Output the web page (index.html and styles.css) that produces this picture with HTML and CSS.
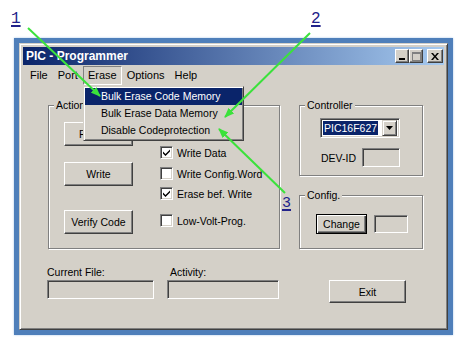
FILE: index.html
```html
<!DOCTYPE html>
<html lang="en">
<head>
    <meta charset="UTF-8">
    <title>PIC - Programmer</title>
    <link rel="stylesheet" href="styles.css">
</head>
<body>
<div class="stage">
    <div class="window">
        <div class="frame">
            <div class="titlebar">
                <span class="title">PIC - Programmer</span>
                <div class="caption-btns">
                    <span class="cbtn"><svg width="8" height="8" viewBox="0 0 8 8"><rect x="1" y="6" width="6" height="2" fill="#000"/></svg></span>
                    <span class="cbtn"><svg width="9" height="9" viewBox="0 0 9 9"><rect x="0.5" y="0.5" width="8" height="8" fill="none" stroke="#808080"/><rect x="0" y="0" width="9" height="2" fill="#808080"/></svg></span>
                    <span class="cbtn close"><svg width="8" height="7" viewBox="0 0 8 7"><path d="M0 0h2l2 2.5 2-2.5h2l-3 3.5 3 3.5h-2l-2-2.5-2 2.5h-2l3-3.5z" fill="#000"/></svg></span>
                </div>
            </div>
            <div class="menubar">
                <span class="menu">File</span>
                <span class="menu">Port</span>
                <span class="menu open">Erase
                    <div class="dropdown">
                        <div class="item hot">Bulk Erase Code Memory</div>
                        <div class="item">Bulk Erase Data Memory</div>
                        <div class="item">Disable Codeprotection</div>
                    </div>
                </span>
                <span class="menu">Options</span>
                <span class="menu">Help</span>
            </div>
            <div class="client">
                <div class="top">
                    <fieldset class="group">
                        <legend>Actions</legend>
                        <div class="actions-body">
                            <div class="btn-col">
                                <button class="btn read">Read All</button>
                                <button class="btn write">Write</button>
                                <button class="btn verify">Verify Code</button>
                            </div>
                            <div class="check-col">
                                <div class="check"><span class="box"><svg width="7" height="7" viewBox="0 0 7 7"><path d="M0 2.5l2.5 2.5 4.5-4.5v2l-4.5 4.5-2.5-2.5z" fill="#000"/></svg></span>Write Data</div>
                                <div class="check gap-a"><span class="box"></span>Write Config.Word</div>
                                <div class="check gap-b"><span class="box"><svg width="7" height="7" viewBox="0 0 7 7"><path d="M0 2.5l2.5 2.5 4.5-4.5v2l-4.5 4.5-2.5-2.5z" fill="#000"/></svg></span>Erase bef. Write</div>
                                <div class="check gap-c"><span class="box"></span>Low-Volt-Prog.</div>
                            </div>
                        </div>
                    </fieldset>
                    <div class="side">
                        <fieldset class="group">
                            <legend>Controller</legend>
                            <div class="controller-body">
                                <div class="select">
                                    <span class="sel-text">PIC16F627</span>
                                    <span class="sel-btn"><svg width="7" height="4" viewBox="0 0 7 4"><path d="M0 0h7l-3.5 4z" fill="#000"/></svg></span>
                                </div>
                                <div class="devid">
                                    <span>DEV-ID</span>
                                    <span class="field devid-box"></span>
                                </div>
                            </div>
                        </fieldset>
                        <fieldset class="group config">
                            <legend>Config.</legend>
                            <div class="config-body">
                                <button class="btn default change">Change</button>
                                <span class="field config-box"></span>
                            </div>
                        </fieldset>
                    </div>
                </div>
                <div class="bottom">
                    <div class="file-col">
                        <div class="label">Current File:</div>
                        <div class="field status"></div>
                    </div>
                    <div class="act-col">
                        <div class="label">Activity:</div>
                        <div class="field status"></div>
                    </div>
                    <button class="btn exit">Exit</button>
                </div>
            </div>
        </div>
    </div>

    <svg class="arrows" width="465" height="343" viewBox="0 0 465 343">
        <defs>
            <marker id="head" viewBox="0 0 10 8" refX="9" refY="4" markerWidth="10" markerHeight="8" markerUnits="userSpaceOnUse" orient="auto">
                <path d="M0 0L10 4L0 8z" fill="#3be23b"/>
            </marker>
        </defs>
        <line x1="28" y1="28" x2="100" y2="96" stroke="#3be23b" stroke-width="2" marker-end="url(#head)"/>
        <line x1="310" y1="33" x2="225" y2="117" stroke="#3be23b" stroke-width="2" marker-end="url(#head)"/>
        <line x1="285" y1="193" x2="219" y2="129" stroke="#3be23b" stroke-width="2" marker-end="url(#head)"/>
    </svg>
    <span class="tag t1">1</span>
    <span class="tag t2">2</span>
    <span class="tag t3">3</span>
</div>
</body>
</html>
```

FILE: styles.css
```css
body {
    margin: 0;
    background: #fff;
    font-family: "Liberation Sans", Arial, sans-serif;
    font-size: 10.5px;
    color: #000;
}
.stage {
    position: relative;
    width: 465px;
    height: 343px;
    padding: 38px 0 0 14px;
    box-sizing: border-box;
    overflow: hidden;
}
.window {
    width: 439px;
    height: 297px;
    box-sizing: border-box;
    border: 5px solid #4f7fba;
    box-shadow: 0 0 2px #a9c8ea;
}
.frame {
    height: 100%;
    box-sizing: border-box;
    background: #d4d0c8;
    border: 1px solid;
    border-color: #d4d0c8 #404040 #404040 #d4d0c8;
    box-shadow: inset 1px 1px #fff, inset -1px -1px #808080;
    padding: 3px;
}

/* title bar */
.titlebar {
    height: 18px;
    display: flex;
    align-items: center;
    justify-content: space-between;
    background: linear-gradient(to right, #0a246a, #a6caf0);
    padding: 0 1px 0 3px;
}
.title {
    color: #fff;
    font-weight: bold;
    font-size: 12px;
}
.caption-btns {
    display: flex;
}
.cbtn {
    width: 14px;
    height: 14px;
    box-sizing: border-box;
    background: #d4d0c8;
    border: 1px solid;
    border-color: #fff #404040 #404040 #fff;
    box-shadow: inset -1px -1px #808080;
    display: flex;
    align-items: center;
    justify-content: center;
}
.cbtn.close {
    width: 16px;
    margin-left: 4px;
}

/* menu */
.menubar {
    display: flex;
    height: 20px;
    padding: 1px 0 0 2px;
    box-sizing: border-box;
    font-size: 11px;
}
.menu {
    position: relative;
    padding: 0 4px;
    line-height: 16px;
    border: 1px solid transparent;
}
.menu.open {
    border-color: #808080 #fff #fff #808080;
}
.dropdown {
    position: absolute;
    top: calc(100% + 2px);
    left: -1px;
    width: 161px;
    box-sizing: border-box;
    background: #d4d0c8;
    border: 1px solid;
    border-color: #d4d0c8 #404040 #404040 #d4d0c8;
    box-shadow: inset 1px 1px #fff, inset -1px -1px #808080;
    padding: 1px;
    z-index: 5;
    font-size: 10.5px;
}
.item {
    line-height: 17px;
    padding-left: 16px;
    white-space: nowrap;
}
.item.hot {
    background: #0a246a;
    color: #fff;
}

/* client area */
.client {
    padding: 14px 0 0 25px;
}
.top {
    display: grid;
    grid-template-columns: 232px 124px;
    column-gap: 19px;
    align-items: start;
}
.group {
    margin: 0;
    padding: 0;
    min-width: 0;
    border: 1px solid #808080;
    box-shadow: inset 1px 1px #fff, 1px 1px #fff;
}
.group legend {
    margin-left: 5px;
    padding: 0 2px;
    line-height: 13px;
    background: #d4d0c8;
}
.btn {
    box-sizing: border-box;
    background: #d4d0c8;
    border: 1px solid;
    border-color: #fff #404040 #404040 #fff;
    box-shadow: inset -1px -1px #808080;
    font-family: inherit;
    font-size: 10.5px;
    color: #000;
    padding: 0;
    display: flex;
    align-items: center;
    justify-content: center;
}
.btn.default {
    border-color: #000;
    box-shadow: inset 1px 1px #fff, inset -1px -1px #404040, inset -2px -2px #808080;
}
.field {
    display: block;
    box-sizing: border-box;
    border: 1px solid;
    border-color: #808080 #fff #fff #808080;
    box-shadow: inset 1px 1px #404040, inset -1px -1px #d4d0c8;
    background: #d4d0c8;
}

/* actions */
.actions-body {
    height: 136px;
    display: grid;
    grid-template-columns: 69px auto;
    column-gap: 27px;
    padding-left: 15px;
}
.btn-col {
    display: flex;
    flex-direction: column;
}
.btn-col .btn {
    height: 24px;
}
.read {
    margin-top: 10px;
}
.write {
    margin-top: 16px;
}
.verify {
    margin-top: 24px;
}
.check-col {
    padding-top: 34px;
}
.check {
    display: flex;
    align-items: center;
    gap: 4px;
    height: 13px;
    white-space: nowrap;
}
.gap-a {
    margin-top: 8px;
}
.gap-b {
    margin-top: 7px;
}
.gap-c {
    margin-top: 14px;
}
.box {
    width: 13px;
    height: 13px;
    flex: none;
    box-sizing: border-box;
    background: #fff;
    border: 1px solid;
    border-color: #808080 #fff #fff #808080;
    box-shadow: inset 1px 1px #404040, inset -1px -1px #d4d0c8;
    display: flex;
    align-items: center;
    justify-content: center;
}

/* controller */
.controller-body {
    padding: 6px 0 8px 20px;
}
.select {
    width: 80px;
    height: 20px;
    box-sizing: border-box;
    border: 1px solid;
    border-color: #808080 #fff #fff #808080;
    box-shadow: inset 1px 1px #404040, inset -1px -1px #d4d0c8;
    background: #fff;
    padding: 2px;
    display: flex;
    align-items: center;
    justify-content: space-between;
}
.sel-text {
    background: #0a246a;
    color: #fff;
    padding: 0 1px;
    line-height: 14px;
}
.sel-btn {
    width: 15px;
    height: 16px;
    box-sizing: border-box;
    background: #d4d0c8;
    border: 1px solid;
    border-color: #d4d0c8 #404040 #404040 #d4d0c8;
    box-shadow: inset 1px 1px #fff, inset -1px -1px #808080;
    display: flex;
    align-items: center;
    justify-content: center;
}
.devid {
    width: 80px;
    margin-top: 10px;
    display: flex;
    align-items: center;
    justify-content: space-between;
    padding-left: 1px;
    box-sizing: border-box;
}
.devid-box {
    width: 38px;
    height: 19px;
}

/* config */
.config {
    margin-top: 13px;
}
.config-body {
    padding: 12px 0 14px 16px;
    display: flex;
    align-items: center;
    gap: 7px;
}
.change {
    width: 51px;
    height: 20px;
}
.config-box {
    width: 34px;
    height: 18px;
}

/* status row */
.bottom {
    display: flex;
    align-items: flex-start;
    margin: 17px 0 0 -1px;
}
.label {
    line-height: 13px;
}
.status {
    margin-top: 1px;
    height: 19px;
}
.file-col {
    width: 107px;
}
.act-col {
    width: 112px;
    margin-left: 13px;
}
.act-col .label {
    padding-left: 3px;
}
.exit {
    width: 77px;
    height: 23px;
    margin: 14px 0 0 50px;
}

/* callouts */
.arrows {
    position: absolute;
    left: 0;
    top: 0;
    z-index: 10;
}
.tag {
    position: absolute;
    font-family: "Liberation Mono", monospace;
    font-size: 16px;
    line-height: 16px;
    color: #22228a;
    text-decoration: underline;
    text-decoration-thickness: 2px;
    text-underline-offset: 2px;
    z-index: 11;
}
.t1 {
    left: 11px;
    top: 11px;
}
.t2 {
    left: 311px;
    top: 11px;
}
.t3 {
    left: 282px;
    top: 196px;
    font-size: 15px;
}
```
